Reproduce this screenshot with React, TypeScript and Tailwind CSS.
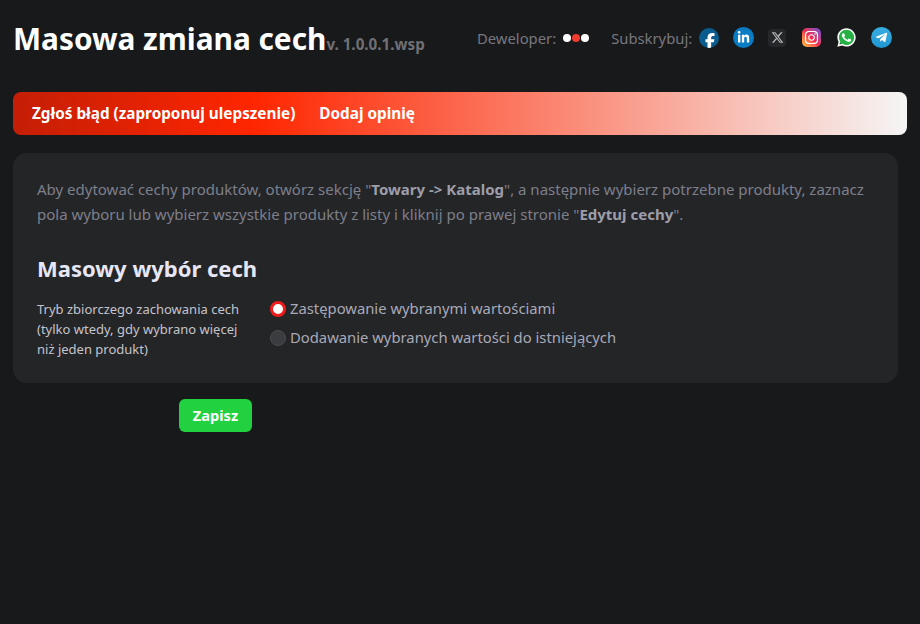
import { FaFacebookF, FaLinkedinIn, FaXTwitter, FaInstagram, FaWhatsapp } from "react-icons/fa6";
import { FaTelegramPlane } from "react-icons/fa";

function SocialIcons() {
  return (
    <div className="flex items-center">
      <div className="w-5 h-5 rounded-full bg-[#0b5c8e] flex items-end justify-center text-white overflow-hidden">
        <FaFacebookF className="w-[16px] h-[16px] mb-[-1px] ml-[2px]" />
      </div>
      <div className="w-[21px] h-[21px] ml-[14px] rounded-full bg-[#0a7cc4] flex items-center justify-center text-white">
        <FaLinkedinIn className="w-[13px] h-[13px]" />
      </div>
      <div className="w-[18px] h-[18px] ml-[14px] rounded-sm bg-[#26272a] flex items-center justify-center text-[#b9b9b9]">
        <FaXTwitter className="w-[13px] h-[13px]" />
      </div>
      <div className="w-[19px] h-[19px] ml-[16px] rounded-[5px] bg-gradient-to-tr from-[#fdc33a] via-[#f0224f] to-[#6a3bd8] flex items-center justify-center text-white">
        <FaInstagram className="w-[15px] h-[15px]" />
      </div>
      <WhatsappBadge />
      <div className="w-[21px] h-[21px] ml-[14px] rounded-full bg-gradient-to-b from-[#37aee2] to-[#1e96d0] flex items-center justify-center text-white">
        <FaTelegramPlane className="w-[13px] h-[13px] mr-[1px]" />
      </div>
    </div>
  );
}

function WhatsappBadge() {
  return (
    <div className="relative w-[21px] h-[21px] ml-[15px] flex items-center justify-center">
      <div className="absolute inset-[2px] rounded-full bg-[#25b244]" />
      <FaWhatsapp className="relative w-[21px] h-[21px] text-white" />
    </div>
  );
}

function Radio({ checked, label }: { checked?: boolean; label: string }) {
  return (
    <label className="flex items-center gap-1 h-[29px] text-[14.8px] text-[#a9a9b8]">
      <span
        className={
          checked
            ? "w-4 h-4 rounded-full bg-white border-[3.5px] border-[#f01c1c]"
            : "w-4 h-4 rounded-full bg-[#3b3c3f] border border-[#4a4b4e]"
        }
      />
      {label}
    </label>
  );
}

export default function App() {
  return (
    <div
      className="min-h-[624px] bg-[#18191b] px-[13px] overflow-hidden"
      style={{ fontFamily: '"Noto Sans", sans-serif' }}
    >
      <header className="flex items-start h-[92px]">
        <div className="flex items-baseline mt-[16px] w-[464px]">
          <h1 className="text-[29.8px] leading-[46px] font-bold text-white">Masowa zmiana cech</h1>
          <span className="text-[15.2px] font-bold text-[#707074]">v. 1.0.0.1.wsp</span>
        </div>
        <div className="flex items-center mt-[27px] text-[14.8px] leading-[20px] text-[#77777f]">
          <span>Deweloper:</span>
          <div className="flex items-center ml-[7px] mr-[22px]">
            <span className="w-2 h-2 rounded-full bg-white" />
            <span className="w-2 h-2 mx-[1px] rounded-full bg-[#ef3b2d]" />
            <span className="w-2 h-2 rounded-full bg-white" />
          </div>
          <span className="mr-[7px]">Subskrybuj:</span>
          <SocialIcons />
        </div>
      </header>

      <nav className="flex items-center gap-6 w-[894px] h-[43px] pl-[19px] rounded-lg bg-[linear-gradient(to_right,#c41e06,#ff2600_27%,#f5f5f5)] text-[15.3px] font-bold text-white">
        <a>Zgłoś błąd (zaproponuj ulepszenie)</a>
        <a>Dodaj opinię</a>
      </nav>

      <section className="mt-[18px] w-[885px] h-[230px] rounded-[14px] bg-[#242527] px-6 pt-[24px]">
        <p className="text-[15px] leading-[25px] text-[#7e7f8b]">
          Aby edytować cechy produktów, otwórz sekcję "<b className="text-[#9d9eaa]">Towary -&gt; Katalog</b>", a następnie wybierz potrzebne produkty, zaznacz pola wyboru lub wybierz wszystkie produkty z listy i kliknij po prawej stronie "<b className="text-[#9d9eaa]">Edytuj cechy</b>".
        </p>
        <h2 className="mt-[26px] text-[22px] leading-[30px] font-bold text-[#e6e6f5]">Masowy wybór cech</h2>
        <div className="flex mt-[11px]">
          <div className="w-[233px] pt-[5px] pr-[24px] text-[13px] leading-[20px] text-[#c4c4cc]">
            Tryb zbiorczego zachowania cech (tylko wtedy, gdy wybrano więcej niż jeden produkt)
          </div>
          <div className="flex flex-col">
            <Radio checked label="Zastępowanie wybranymi wartościami" />
            <Radio label="Dodawanie wybranych wartości do istniejących" />
          </div>
        </div>
      </section>

      <button className="block mt-4 ml-[166px] w-[73px] h-[33px] rounded-md bg-[#22d13f] text-[14.6px] font-bold text-white">
        Zapisz
      </button>
    </div>
  );
}
